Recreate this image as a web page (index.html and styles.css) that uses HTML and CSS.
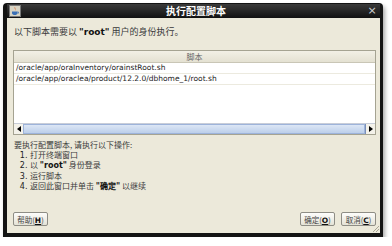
FILE: index.html
```html
<!DOCTYPE html>
<html lang="zh-CN">
<head>
    <meta charset="UTF-8">
    <title>执行配置脚本</title>
    <link rel="stylesheet" href="styles.css">
</head>
<body>
    <div class="window">
        <div class="titlebar">
            <svg class="app-icon" width="10" height="10" viewBox="0 0 10 10">
                <rect x="0" y="0" width="10" height="10" fill="#d8d4c4"/>
                <path d="M5 1 C3.5 2.5 6.5 3.5 5 5 C6.5 4 5 2.5 5 1 Z" fill="#e05a1c"/>
                <path d="M2 5.5 H7.5 V7 C7.5 8.5 6 9 4.8 9 C3.5 9 2 8.5 2 7 Z" fill="#3a6fb5"/>
                <path d="M7.5 6 H8.5 V7.2 H7.5" fill="none" stroke="#3a6fb5" stroke-width="0.7"/>
            </svg>
            <div class="title">执行配置脚本</div>
            <div class="close">×</div>
        </div>
        <div class="content">
            <div class="intro">以下脚本需要以 <b>"root"</b> 用户的身份执行。</div>

            <div class="table">
                <div class="table-head">脚本</div>
                <div class="table-body">
                    <div class="row">/oracle/app/oraInventory/orainstRoot.sh</div>
                    <div class="row">/oracle/app/oraclea/product/12.2.0/dbhome_1/root.sh</div>
                </div>
                <div class="hscroll">
                    <div class="arrow left">
                        <svg width="4" height="6" viewBox="0 0 4 6"><path d="M4 0 L0 3 L4 6 Z" fill="#000"/></svg>
                    </div>
                    <div class="thumb"></div>
                    <div class="arrow right">
                        <svg width="4" height="6" viewBox="0 0 4 6"><path d="M0 0 L4 3 L0 6 Z" fill="#000"/></svg>
                    </div>
                </div>
            </div>

            <div class="steps">
                <div>要执行配置脚本, 请执行以下操作:</div>
                <ol>
                    <li>打开终端窗口</li>
                    <li>以 <b>"root"</b> 身份登录</li>
                    <li>运行脚本</li>
                    <li>返回此窗口并单击 <b>"确定"</b> 以继续</li>
                </ol>
            </div>

            <div class="buttons">
                <button class="btn">帮助(<u>H</u>)</button>
                <div class="spacer"></div>
                <button class="btn">确定(<u>O</u>)</button>
                <button class="btn">取消(<u>C</u>)</button>
            </div>
            <div class="grip"></div>
        </div>
    </div>
</body>
</html>
```

FILE: styles.css
```css
body {
    margin: 0;
    background: #ffffff;
    font-family: "DejaVu Sans", "Noto Sans CJK SC", sans-serif;
}

.window {
    margin: 3px 0 0 3px;
    width: 380px;
    height: 234px;
    background: #141414;
    border-radius: 4px 4px 0 0;
    padding: 1px 3px 4px 4px;
    box-sizing: border-box;
    display: flex;
    flex-direction: column;
    box-shadow: 2px 3px 4px rgba(0, 0, 0, 0.35);
}

.titlebar {
    height: 14px;
    display: flex;
    align-items: center;
    background: linear-gradient(#3a3a3a, #111111);
    position: relative;
}

.app-icon {
    margin-left: 2px;
    border: 1px solid #777;
}

.title {
    flex: 1;
    text-align: center;
    color: #ffffff;
    font-family: "Noto Sans CJK SC", sans-serif;
    font-weight: bold;
    font-size: 10px;
    line-height: 14px;
    margin-left: 6px;
}

.close {
    width: 14px;
    color: #d0d0d0;
    font-size: 11px;
    line-height: 14px;
    text-align: center;
    margin-right: 1px;
}

.content {
    flex: 1;
    background: #ece9da;
    display: flex;
    flex-direction: column;
    padding: 8px 4px 7px 6px;
    position: relative;
    color: #3a3a3a;
    font-size: 8px;
}

.intro {
    font-family: "Noto Sans CJK SC", sans-serif;
    font-size: 9px;
    line-height: 12px;
    padding-left: 1px;
}

b {
    font-family: "DejaVu Sans", sans-serif;
    color: #111;
}

.table {
    margin-top: 12px;
    height: 83px;
    border: 1px solid #a5a392;
    display: flex;
    flex-direction: column;
    background: #ffffff;
}

.table-head {
    height: 11px;
    line-height: 11px;
    text-align: center;
    font-family: "Noto Sans CJK SC", sans-serif;
    font-size: 8px;
    color: #666;
    background: linear-gradient(#f2f0e6, #e4e1d2);
    border-bottom: 1px solid #c9c6b6;
}

.table-body {
    flex: 1;
}

.row {
    height: 10px;
    line-height: 10px;
    padding-left: 2px;
    border-bottom: 1px solid #eceadf;
    color: #222;
    font-size: 7.5px;
}

.hscroll {
    height: 10px;
    display: flex;
    background: #eef0f4;
    border-top: 1px solid #c8cdd8;
}

.arrow {
    width: 9px;
    display: flex;
    align-items: center;
    justify-content: center;
    background: #f4f2ea;
}

.arrow.right {
    border-left: 1px solid #7a8fb8;
}

.thumb {
    flex: 1;
    background: linear-gradient(#dce6f5, #bccfea);
    border: 1px solid #9db3da;
}

.steps {
    margin-top: 5px;
    font-family: "Noto Sans CJK SC", sans-serif;
    font-size: 8px;
    line-height: 10px;
    padding-left: 1px;
}

.steps ol {
    margin: 0;
    padding-left: 16px;
}

.steps li::marker {
    font-family: "DejaVu Sans", sans-serif;
    color: #222;
}

.buttons {
    margin-top: auto;
    display: flex;
    gap: 6px;
}

.spacer {
    flex: 1;
}

.btn {
    width: 35px;
    height: 14px;
    padding: 0;
    font-family: "Noto Sans CJK SC", sans-serif;
    font-size: 7.5px;
    color: #444;
    background: linear-gradient(#fdfdfb, #e4e2d6);
    border: 1px solid #8e8d85;
    border-radius: 2px;
}

.btn u {
    font-family: "DejaVu Sans", sans-serif;
    font-weight: bold;
    color: #111;
}

.grip {
    position: absolute;
    right: 1px;
    bottom: 1px;
    width: 6px;
    height: 6px;
    background: linear-gradient(135deg, transparent 45%, #a8a595 45%, #a8a595 55%, transparent 55%, transparent 70%, #a8a595 70%, #a8a595 80%, transparent 80%);
}
```
